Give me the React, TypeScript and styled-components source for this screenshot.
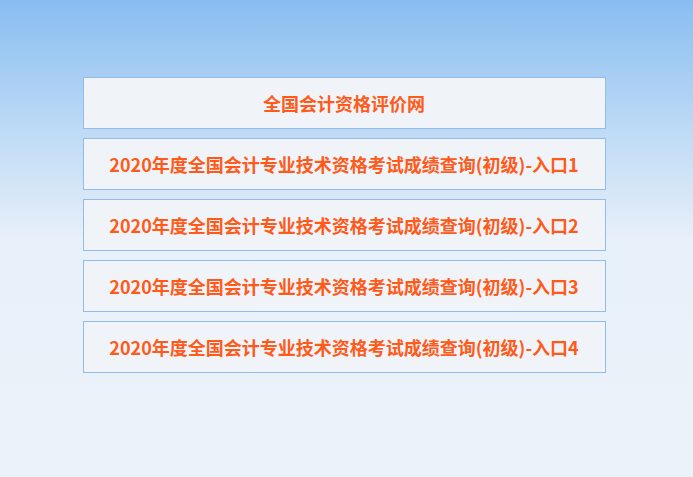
import React from 'react';
import styled, { createGlobalStyle } from 'styled-components';

const GlobalStyle = createGlobalStyle`
  html, body {
    margin: 0;
    padding: 0;
    height: 100%;
  }
  body {
    background: linear-gradient(to bottom, #88bdf1 0px, #bcd9f5 125px, #e8f0f9 240px, #ebf2fa 477px) no-repeat;
    background-color: #ebf2fa;
    min-height: 477px;
    font-family: "Microsoft YaHei", "Noto Sans CJK SC", "Noto Sans", sans-serif;
  }
`;

const Page = styled.div`
  padding: 77px 5px 0 0;
`;

const LinkList = styled.ul`
  list-style: none;
  width: 523px;
  margin: 0 auto;
  padding: 0;
  display: flex;
  flex-direction: column;
  gap: 9px;
`;

const LinkItem = styled.li`
  box-sizing: border-box;
  height: 52px;
  border: 1px solid #90bde9;
  background: #f0f4f8;
  display: flex;
  align-items: center;
  justify-content: center;
`;

const LinkText = styled.a`
  color: #ff5a1a;
  font-weight: bold;
  font-size: 18px;
  text-decoration: none;
  white-space: nowrap;
`;

const entries = [1, 2, 3, 4];

const App: React.FC = () => {
  return (
    <>
      <GlobalStyle />
      <Page>
        <LinkList>
          <LinkItem>
            <LinkText href="#">全国会计资格评价网</LinkText>
          </LinkItem>
          {entries.map(n => (
            <LinkItem key={n}>
              <LinkText href="#">
                2020年度全国会计专业技术资格考试成绩查询(初级)-入口{n}
              </LinkText>
            </LinkItem>
          ))}
        </LinkList>
      </Page>
    </>
  );
};

export default App;
